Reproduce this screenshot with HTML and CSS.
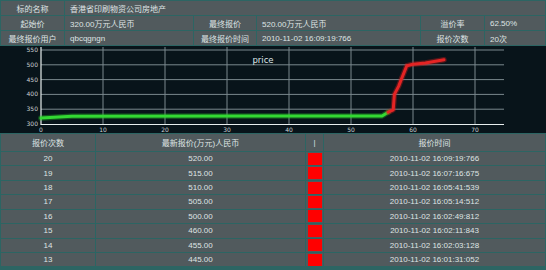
FILE: index.html
```html
<!DOCTYPE html>
<html>
<head>
<meta charset="utf-8">
<link rel="stylesheet" href="styles.css">
</head>
<body>
<div class="info">
  <div class="c lab">标的名称</div>
  <div class="c val span5">香港省印刷物资公司房地产</div>
  <div class="c lab">起始价</div>
  <div class="c val">320.00万元人民币</div>
  <div class="c lab">最终报价</div>
  <div class="c val">520.00万元人民币</div>
  <div class="c lab">溢价率</div>
  <div class="c val">62.50%</div>
  <div class="c lab">最终报价用户</div>
  <div class="c val">qbcqgngn</div>
  <div class="c lab">最终报价时间</div>
  <div class="c val">2010-11-02 16:09:19:766</div>
  <div class="c lab">报价次数</div>
  <div class="c val">20次</div>
</div>
<div class="chart">
  <svg width="546" height="87" viewBox="0 0 546 87">
    <g class="grid">
      <line x1="41" y1="4" x2="504" y2="4"/>
      <line x1="41" y1="18.8" x2="504" y2="18.8"/>
      <line x1="41" y1="33.6" x2="504" y2="33.6"/>
      <line x1="41" y1="48.4" x2="504" y2="48.4"/>
      <line x1="41" y1="63.2" x2="504" y2="63.2"/>
      <line x1="103" y1="1" x2="103" y2="78"/>
      <line x1="165" y1="1" x2="165" y2="78"/>
      <line x1="227" y1="1" x2="227" y2="78"/>
      <line x1="289" y1="1" x2="289" y2="78"/>
      <line x1="351" y1="1" x2="351" y2="78"/>
      <line x1="413" y1="1" x2="413" y2="78"/>
      <line x1="475" y1="1" x2="475" y2="78"/>
    </g>
    <g class="axis">
      <line x1="41" y1="1" x2="41" y2="78.5"/>
      <line x1="40.5" y1="78.5" x2="504" y2="78.5"/>
    </g>
    <g class="ylab">
      <text x="38" y="6">550</text>
      <text x="38" y="20.8">500</text>
      <text x="38" y="35.6">450</text>
      <text x="38" y="50.4">400</text>
      <text x="38" y="65.2">350</text>
      <text x="38" y="80">300</text>
    </g>
    <g class="xlab">
      <text x="41" y="86">0</text>
      <text x="103" y="86">10</text>
      <text x="165" y="86">20</text>
      <text x="227" y="86">30</text>
      <text x="289" y="86">40</text>
      <text x="351" y="86">50</text>
      <text x="413" y="86">60</text>
      <text x="475" y="86">70</text>
    </g>
    <text class="title" x="263" y="17">price</text>
    <polyline class="glow-g" points="41,72.1 72,70.3 382,70 388.2,66.2"/>
    <polyline class="line-g" points="41,72.1 72,70.3 382,70 388.2,66.2"/>
    <polyline class="glow-r" points="388.2,66.2 393.2,63.8 394.4,48.4 398.7,40.1 401.2,33.6 406.8,19.7 413,18.2 425.4,17 444,13.8"/>
    <polyline class="line-r" points="388.2,66.2 393.2,63.8 394.4,48.4 398.7,40.1 401.2,33.6 406.8,19.7 413,18.2 425.4,17 444,13.8"/>
  </svg>
</div>
<div class="tbl">
  <div class="h">报价次数</div>
  <div class="h">最新报价(万元)人民币</div>
  <div class="h">|</div>
  <div class="h">报价时间</div>

  <div class="d">20</div><div class="d">520.00</div><div class="d mk"><span class="sq"></span></div><div class="d">2010-11-02 16:09:19:766</div>
  <div class="d">19</div><div class="d">515.00</div><div class="d mk"><span class="sq"></span></div><div class="d">2010-11-02 16:07:16:675</div>
  <div class="d">18</div><div class="d">510.00</div><div class="d mk"><span class="sq"></span></div><div class="d">2010-11-02 16:05:41:539</div>
  <div class="d">17</div><div class="d">505.00</div><div class="d mk"><span class="sq"></span></div><div class="d">2010-11-02 16:05:14:512</div>
  <div class="d">16</div><div class="d">500.00</div><div class="d mk"><span class="sq"></span></div><div class="d">2010-11-02 16:02:49:812</div>
  <div class="d">15</div><div class="d">460.00</div><div class="d mk"><span class="sq"></span></div><div class="d">2010-11-02 16:02:11:843</div>
  <div class="d">14</div><div class="d">455.00</div><div class="d mk"><span class="sq"></span></div><div class="d">2010-11-02 16:02:03:128</div>
  <div class="d">13</div><div class="d">445.00</div><div class="d mk"><span class="sq"></span></div><div class="d">2010-11-02 16:01:31:052</div>
</div>
</body>
</html>
```
FILE: styles.css
```css
html, body {
  margin: 0;
  padding: 0;
}
body {
  width: 546px;
  height: 270px;
  overflow: hidden;
  background: #2c6563;
  font-family: "Liberation Sans", "Noto Sans CJK SC", sans-serif;
  font-size: 8px;
  color: #dfe4e4;
}
.info {
  display: grid;
  grid-template-columns: 63px 128px 62px 163px 63px 1fr;
  grid-auto-rows: 14px;
  gap: 1px;
  padding: 1px 1px 0 1px;
  background: #2c6563;
}
.c {
  background: #515a5d;
  display: flex;
  align-items: center;
  white-space: nowrap;
  overflow: hidden;
}
.lab {
  justify-content: center;
}
.val {
  padding-left: 5px;
}
.span5 {
  grid-column: span 5;
}
.chart {
  margin-top: 1px;
  height: 87px;
  background: #08141a;
}
.chart svg {
  display: block;
}
.grid line {
  stroke: #7a888d;
  stroke-width: 1;
}
.axis line {
  stroke: #e8eeee;
  stroke-width: 1.2;
}
.ylab text {
  fill: #c9d0d2;
  font-family: "DejaVu Sans", sans-serif;
  font-size: 6px;
  text-anchor: end;
}
.xlab text {
  fill: #c9d0d2;
  font-family: "DejaVu Sans", sans-serif;
  font-size: 6px;
  text-anchor: middle;
}
.title {
  fill: #dfe6e8;
  font-family: "DejaVu Sans", sans-serif;
  font-size: 8.5px;
  text-anchor: middle;
}
polyline {
  fill: none;
  stroke-linejoin: round;
  stroke-linecap: round;
}
.glow-g {
  stroke: rgba(40, 200, 40, 0.35);
  stroke-width: 5.5;
}
.line-g {
  stroke: #33d933;
  stroke-width: 3;
}
.glow-r {
  stroke: rgba(220, 30, 30, 0.35);
  stroke-width: 5.5;
}
.line-r {
  stroke: #e42424;
  stroke-width: 3;
}
.tbl {
  display: grid;
  grid-template-columns: 94px 209px 17px 1fr;
  grid-template-rows: 17px;
  grid-auto-rows: 13.43px;
  gap: 1px;
  padding: 1px 1px 0 1px;
  background: #2c6563;
}
.h, .d {
  background: #515a5d;
  display: flex;
  align-items: center;
  justify-content: center;
  white-space: nowrap;
  overflow: hidden;
}
.mk {
  justify-content: flex-start;
  padding-left: 2px;
}
.sq {
  width: 14px;
  height: 12px;
  background: #ff0000;
}
```
